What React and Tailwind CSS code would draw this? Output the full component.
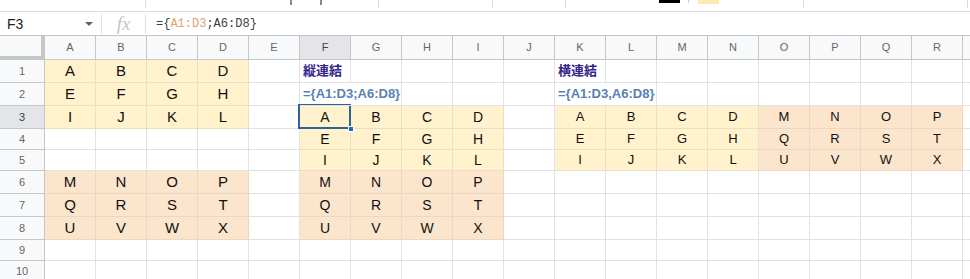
import React from "react";

const COLS = ["A", "B", "C", "D", "E", "F", "G", "H", "I", "J", "K", "L", "M", "N", "O", "P", "Q", "R", "S"];

const ROWS = [
    { n: 1, tall: true },
    { n: 2, tall: true },
    { n: 3, tall: true },
    { n: 4, tall: false },
    { n: 5, tall: false },
    { n: 6, tall: true },
    { n: 7, tall: true },
    { n: 8, tall: true },
    { n: 9, tall: false },
    { n: 10, tall: false },
];

// cell map: "F3" -> { v, fill, size }
const cells = {};
const put = (row, startCol, letters, fill, size) => {
    const start = COLS.indexOf(startCol);
    letters.split("").forEach((v, i) => {
        cells[COLS[start + i] + row] = { v, fill, size };
    });
};

put(1, "A", "ABCD", "y", "lg");
put(2, "A", "EFGH", "y", "lg");
put(3, "A", "IJKL", "y", "lg");
put(6, "A", "MNOP", "o", "lg");
put(7, "A", "QRST", "o", "lg");
put(8, "A", "UVWX", "o", "lg");

put(3, "F", "ABCD", "y", "md");
put(4, "F", "EFGH", "y", "md");
put(5, "F", "IJKL", "y", "md");
put(6, "F", "MNOP", "o", "md");
put(7, "F", "QRST", "o", "md");
put(8, "F", "UVWX", "o", "md");

put(3, "K", "ABCD", "y", "sm");
put(4, "K", "EFGH", "y", "sm");
put(5, "K", "IJKL", "y", "sm");
put(3, "O", "MNOP", "o", "sm");
put(4, "O", "QRST", "o", "sm");
put(5, "O", "UVWX", "o", "sm");

const FONT = "font-['Liberation_Sans','Noto_Sans_CJK_JP',Arial,sans-serif]";

const Toolbar = () => {
    const sep = "w-px h-[8px] bg-[#dadce0]";
    return (
        <div className="flex items-start h-[12px] border-b border-[#dadce0] bg-white overflow-hidden">
            <div className={`ml-[145px] ${sep}`} />
            <div className="ml-[144px] w-[2px] h-[5px] bg-[#8a8a8a]" />
            <div className="ml-[28px] w-[2px] h-[5px] bg-[#8a8a8a]" />
            <div className={`ml-[56px] ${sep}`} />
            <div className={`ml-[113px] ${sep}`} />
            <div className={`ml-[72px] ${sep}`} />
            <div className="ml-[93px] w-[21px] h-[3px] bg-black" />
            <div className="ml-[8px] w-px h-[3px] bg-[#cfcfcf]" />
            <div className="ml-[9px] w-[21px] h-[4px] bg-[#fde9b4]" />
            <div className={`ml-[84px] ${sep}`} />
            <div className={`ml-[163px] ${sep}`} />
        </div>
    );
};

const FormulaBar = () => (
    <div className="flex items-center h-[24px] border-b border-[#c7c7c7] bg-white">
        <div className="w-[101px] flex items-center justify-between pl-[7px] pr-[8px]">
            <span className="text-[14px] text-[#202124] leading-none">F3</span>
            <span className="w-0 h-0 border-l-[4px] border-r-[4px] border-t-[4px] border-l-transparent border-r-transparent border-t-[#5f6368]" />
        </div>
        <div className="w-px h-[20px] bg-[#e0e0e0]" />
        <div className="w-[43px] flex items-center justify-center">
            <span className="font-['Liberation_Serif',serif] italic text-[19px] text-[#c4c4c4] leading-none">fx</span>
        </div>
        <div className="w-px h-[20px] bg-[#e0e0e0]" />
        <div className="pl-[10px] font-['Liberation_Mono',monospace] text-[12px] leading-none text-[#3c4043] whitespace-pre">
            <span>={"{"}</span>
            <span className="text-[#e0a36e]">A1:D3</span>
            <span>;A6:D8{"}"}</span>
        </div>
    </div>
);

const HeaderRow = () => (
    <div className="flex h-[24px]">
        <div className="w-[45px] shrink-0 h-full bg-[#f8f9fa] border-r-[4px] border-b-[4px] border-[#c4c7c5]" />
        {COLS.map((c) => (
            <div
                key={c}
                className={`w-[51px] shrink-0 h-full flex items-center justify-center text-[11px] border-r border-b border-[#c4c7c5] ${
                    c === "F" ? "bg-[#e3e5e8] text-[#3c4043]" : "bg-[#f8f9fa] text-[#666]"
                }`}
            >
                {c === "S" ? null : c}
            </div>
        ))}
    </div>
);

const sizeClass = { lg: "text-[15px]", md: "text-[14px]", sm: "text-[13px]" };

const Cell = ({ col, row }) => {
    const key = col + row;
    const data = cells[key];
    let cls = "w-[51px] shrink-0 h-full border-b flex items-center";
    let content = null;

    if (data) {
        cls += data.fill === "y" ? " bg-[#fff2cc] border-[#eadfc0]" : " bg-[#fce5cd] border-[#efd6c0]";
        cls += " border-r justify-center text-[#111] " + sizeClass[data.size];
        content = data.v;
    } else {
        cls += " border-[#e2e2e2]";
        if (key === "F2" || key === "K2") {
            cls += " relative z-10";
        } else {
            cls += " border-r";
        }
    }

    if (key === "F1" || key === "K1") {
        content = <span className="pl-[3px] text-[13px] font-bold text-[#33248a]">{key === "F1" ? "縦連結" : "横連結"}</span>;
    }
    if (key === "F2" || key === "K2") {
        content = (
            <span className="pl-[3px] text-[13px] font-bold text-[#5a80b6] whitespace-nowrap">
                {key === "F2" ? "={A1:D3;A6:D8}" : "={A1:D3,A6:D8}"}
            </span>
        );
    }

    return (
        <div className={cls + (key === "F3" ? " relative" : "")}>
            {content}
            {key === "F3" && (
                <>
                    <div className="absolute left-[-2px] top-[-2px] right-[-1px] bottom-[-1px] border-2 border-[#2b6596]" />
                    <div className="absolute right-[-4px] bottom-[-4px] w-[6px] h-[6px] bg-[#1f69b8] border border-white" />
                </>
            )}
        </div>
    );
};

const Row = ({ n, tall }) => (
    <div className={`flex ${tall ? "h-[23px]" : "h-[21px]"}`}>
        <div
            className={`w-[45px] shrink-0 h-full flex items-center justify-center text-[11px] border-r border-b border-[#c4c7c5] ${
                n === 3 ? "bg-[#e3e5e8] text-[#3c4043]" : "bg-[#f8f9fa] text-[#666]"
            }`}
        >
            {n}
        </div>
        {COLS.map((c) => (
            <Cell key={c} col={c} row={n} />
        ))}
    </div>
);

export default function App() {
    return (
        <div className={`w-[970px] h-[279px] overflow-hidden bg-white ${FONT}`}>
            <Toolbar />
            <FormulaBar />
            <HeaderRow />
            {ROWS.map((r) => (
                <Row key={r.n} n={r.n} tall={r.tall} />
            ))}
        </div>
    );
}
